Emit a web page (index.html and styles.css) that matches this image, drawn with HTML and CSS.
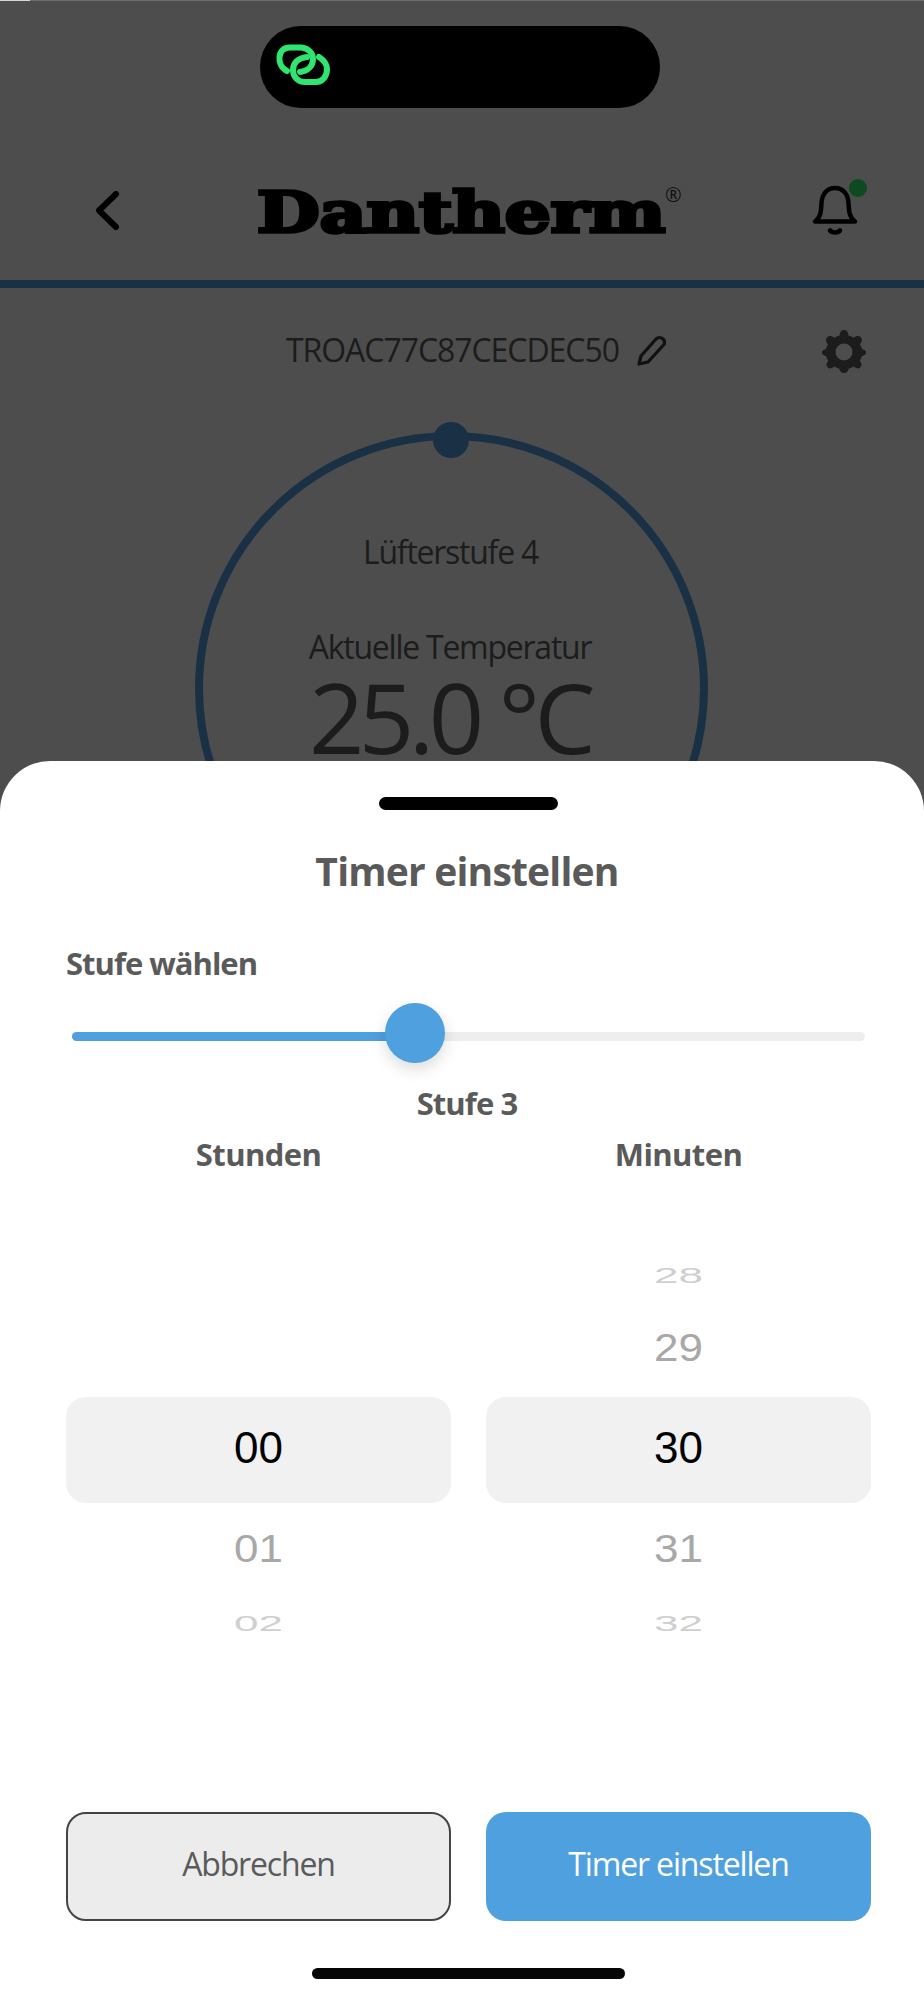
FILE: index.html
```html
<!DOCTYPE html>
<html lang="de">
<head>
<meta charset="utf-8">
<title>Dantherm Timer</title>
<link rel="stylesheet" href="styles.css">
</head>
<body>
<div class="phone">
  <div class="backdrop">
    <div class="island-row">
      <div class="island">
        <svg class="link-icon" width="60" height="50" viewBox="15 24 60 50">
          <path d="M27 53C21 50 19 44 19.500 39C20 33 24 29.500 30 29.500H41C49 30 53 36 53 41C53 48 48 53 40 54"/>
          <path d="M59 39C65 43 67 48 67 51C67 59 62 64 56 64H45C38 64 33 59 33 52C33 45 38 40 47 39"/>
        </svg>
      </div>
    </div>
    <header class="topbar">
      <svg class="back" width="24" height="40" viewBox="0 0 24 40"><path d="M20 3 3 19.500 20 36"/></svg>
      <div class="logo"><span class="logo-word">Dantherm</span><span class="logo-mark">®</span></div>
      <div class="bell-wrap">
        <svg class="bell" width="48" height="52" viewBox="0 0 48 52">
          <path class="bell-body" d="M4 36.500H44C38 32 38 26 37.500 18C37 9 32 3 24 3C16 3 11 9 10.500 18C10 26 10 32 4 36.500Z"/>
          <path class="bell-body" d="M19 45.500C21 48 27 48 29 45.500"/>
        </svg>
        <span class="dot"></span>
      </div>
    </header>
    <div class="rule"></div>
    <div class="device-row">
      <span class="device-name">TROAC77C87CECDEC50</span>
      <svg class="pencil" width="30" height="32" viewBox="0 0 30 32">
        <path d="M3 29 5 21 20 4C22 2 25 2 27 4C29 6 29 8 27.500 10L12 27Z"/>
      </svg>
      <svg class="gear" width="44" height="44" viewBox="0 0 44 44">
        <path fill-rule="evenodd" d="M22 1C25 1 26 3 26.500 6.500C28.500 7 30 7.700 31.500 8.800C34.500 6.800 36.800 6.300 38.800 8.300C40.800 10.300 40 12.700 38 15.500C39 17 39.600 18.500 40 20C43 20.700 44 22 44 23.500C44 25.500 42.500 26.500 39.800 27.200C39.300 29 38.700 30.300 37.800 31.800C39.700 34.500 40.300 36.500 38.500 38.300C36.500 40.300 34.200 39.500 31.500 37.600C30 38.600 28.500 39.200 26.700 39.700C26 42.500 24.500 44 22 44C19.500 44 18 42.500 17.300 39.700C15.500 39.200 14 38.600 12.500 37.600C9.800 39.500 7.500 40.300 5.500 38.300C3.700 36.500 4.300 34.500 6.200 31.800C5.300 30.300 4.700 29 4.200 27.200C1.500 26.500 0 25.500 0 23.500C0 22 1 20.700 4 20C4.400 18.500 5 17 6 15.500C4 12.700 3.200 10.300 5.200 8.300C7.200 6.300 9.500 6.800 12.500 8.800C14 7.700 15.500 7 17.500 6.500C18 3 19 1 22 1ZM22 14.500A8.500 8.500 0 1 0 22 31.500A8.500 8.500 0 1 0 22 14.500Z"/>
      </svg>
    </div>
    <div class="dial">
      <span class="dial-knob"></span>
      <div class="dial-fan">Lüfterstufe 4</div>
      <div class="dial-label">Aktuelle Temperatur</div>
      <div class="dial-temp">25.0 °C</div>
    </div>
  </div>

  <section class="sheet">
    <div class="grabber"></div>
    <h1 class="sheet-title">Timer einstellen</h1>
    <div class="level-label">Stufe wählen</div>
    <div class="slider">
      <div class="slider-fill"></div>
      <div class="slider-knob"></div>
    </div>
    <div class="level-value">Stufe 3</div>
    <div class="columns">
      <div class="col-head">Stunden</div>
      <div class="col-head">Minuten</div>
    </div>
    <div class="columns pickers">
      <div class="picker">
        <div class="wheel far top"></div>
        <div class="wheel near top"></div>
        <div class="wheel current">00</div>
        <div class="wheel near bottom"><span>01</span></div>
        <div class="wheel far bottom"><span>02</span></div>
      </div>
      <div class="picker">
        <div class="wheel far top"><span>28</span></div>
        <div class="wheel near top"><span>29</span></div>
        <div class="wheel current">30</div>
        <div class="wheel near bottom"><span>31</span></div>
        <div class="wheel far bottom"><span>32</span></div>
      </div>
    </div>
    <div class="columns actions">
      <button class="btn btn-cancel">Abbrechen</button>
      <button class="btn btn-primary">Timer einstellen</button>
    </div>
    <div class="home-bar"></div>
  </section>
</div>
</body>
</html>
```

FILE: styles.css
```css
* { box-sizing: border-box; }
html, body { margin: 0; padding: 0; }
body { background: #4d4d4d; font-family: "Open Sans", "Noto Sans", sans-serif; }

.phone {
  width: 924px;
  height: 2000px;
  display: flex;
  flex-direction: column;
  overflow: hidden;
  background: #4d4d4d;
}

.backdrop {
  height: 761px;
  flex: none;
  color: #1c1c1c;
  border-top: 1px solid #6e6e6e;
  position: relative;
}
.backdrop::before {
  content: "";
  position: absolute;
  left: 0;
  top: -1px;
  width: 30px;
  height: 1px;
  background: #d8d8d8;
}

.island-row { display: flex; padding: 25px 0 0 260px; }
.island {
  width: 400px;
  height: 82px;
  background: #000;
  border-radius: 41px;
  display: flex;
  align-items: center;
  padding-left: 15px;
}
.link-icon { fill: none; stroke: #2fe56f; stroke-width: 6; stroke-linecap: round; }

.topbar {
  height: 172px;
  display: flex;
  align-items: flex-start;
  padding-left: 96px;
  position: relative;
}
.back { fill: none; stroke: #000; stroke-width: 6; stroke-linecap: round; stroke-linejoin: round; margin-top: 83px; }

.logo {
  width: 410px;
  margin-left: 137px;
  margin-top: 70px;
  display: flex;
  align-items: flex-start;
  position: relative;
}
.logo-word {
  font-family: "DejaVu Serif", "Liberation Serif", serif;
  font-weight: 700;
  font-size: 56px;
  line-height: 68px;
  color: #000;
  -webkit-text-stroke: 3.500px #000;
  transform: scaleX(1.29);
  transform-origin: left center;
  white-space: nowrap;
}
.logo-mark {
  position: absolute;
  left: 408px;
  top: 6px;
  font-size: 20px;
  line-height: 22px;
  color: #111;
}

.bell-wrap { position: absolute; left: 811px; top: 77px; width: 48px; height: 52px; }
.bell-body { fill: none; stroke: #000; stroke-width: 4.500; stroke-linecap: round; stroke-linejoin: round; }
.dot { position: absolute; left: 38px; top: -6px; width: 18px; height: 18px; border-radius: 50%; background: #0d4a20; }

.rule { height: 8px; background: #1a3045; }

.device-row {
  height: 144px;
  display: flex;
  align-items: flex-start;
  padding-left: 286px;
  position: relative;
}
.device-name { font-size: 32px; line-height: 40px; margin-top: 42px; letter-spacing: -1.050px; white-space: nowrap; }
.pencil { position: absolute; left: 636px; top: 47px; fill: none; stroke: #111; stroke-width: 3.200; stroke-linejoin: round; }
.gear { position: absolute; left: 822px; top: 41px; fill: #1c1c1c; }

.dial {
  width: 513px;
  height: 513px;
  margin-left: 195px;
  border: 8px solid #1a3045;
  border-radius: 50%;
  display: flex;
  flex-direction: column;
  align-items: center;
  position: relative;
}
.dial-knob { position: absolute; left: 230px; top: -18px; width: 36px; height: 36px; border-radius: 50%; background: #1a3045; }
.dial-fan { font-size: 32px; line-height: 40px; margin-top: 92px; margin-right: 2px; letter-spacing: -1.250px; }
.dial-label { font-size: 32px; line-height: 36px; margin-top: 57px; margin-right: 3px; letter-spacing: -1.250px; }
.dial-temp { font-size: 97px; line-height: 76px; margin-top: 13px; margin-right: 4px; letter-spacing: -5.500px; white-space: nowrap; }

.sheet {
  flex: 1;
  background: #fff;
  border-radius: 50px 50px 0 0;
  padding: 0 53px 0 66px;
  display: flex;
  flex-direction: column;
  color: #5a5a5a;
  position: relative;
}
.grabber { width: 179px; height: 13px; border-radius: 7px; background: #000; margin: 36px 0 1px 313px; flex: none; }
.sheet-title { margin: 35px 0 0; font-size: 39px; line-height: 50px; font-weight: 700; text-align: center; letter-spacing: -0.800px; padding-right: 3px; }
.level-label { font-size: 31px; line-height: 40px; font-weight: 700; margin-top: 47px; letter-spacing: -1px; }

.slider { height: 9px; margin: 49px 6px 0; background: #eeeeee; border-radius: 5px; position: relative; flex: none; }
.slider-fill { width: 342px; height: 100%; background: #4fa0de; border-radius: 5px 0 0 5px; }
.slider-knob {
  position: absolute;
  left: 313px;
  top: -29px;
  width: 60px;
  height: 60px;
  border-radius: 50%;
  background: #4fa0de;
  box-shadow: 0 6px 16px rgba(0, 0, 0, .14);
}

.level-value { font-size: 31px; line-height: 40px; font-weight: 700; text-align: center; margin-top: 42px; letter-spacing: -0.900px; padding-right: 3px; }

.columns { display: grid; grid-template-columns: 385px 385px; column-gap: 35px; flex: none; }
.col-head { font-size: 31px; line-height: 40px; font-weight: 700; text-align: center; margin-top: 11px; letter-spacing: -0.600px; }

.pickers { margin-top: 71px; }
.picker { display: flex; flex-direction: column; font-family: "Liberation Sans", Arial, sans-serif; }
.wheel { display: flex; align-items: center; justify-content: center; font-size: 44px; }
.wheel span { display: block; line-height: 1; }
.wheel.far { height: 60px; color: #cfcfcf; }
.wheel.far span { transform: scale(1, .52); }
.wheel.far.bottom { padding-bottom: 4px; }
.wheel.near { height: 92px; color: #a8a8a8; }
.wheel.near span { transform: scale(1, .9); }
.wheel.near.top { padding-bottom: 6px; }
.wheel.current { height: 106px; background: #f1f1f1; border-radius: 20px; color: #000; padding-bottom: 4px; }

.actions { position: absolute; left: 66px; top: 1051px; }
.btn { height: 109px; border-radius: 20px; font: 400 32px/40px "Open Sans", "Noto Sans", sans-serif; letter-spacing: -1.150px; padding: 0 0 5px; }
.btn-cancel { background: #ececec; border: 2px solid #444; color: #5a5a5a; }
.btn-primary { background: #4fa0de; border: 0; color: #fff; }

.home-bar { position: absolute; left: 312px; top: 1207px; width: 313px; height: 11px; border-radius: 6px; background: #050505; }
```
